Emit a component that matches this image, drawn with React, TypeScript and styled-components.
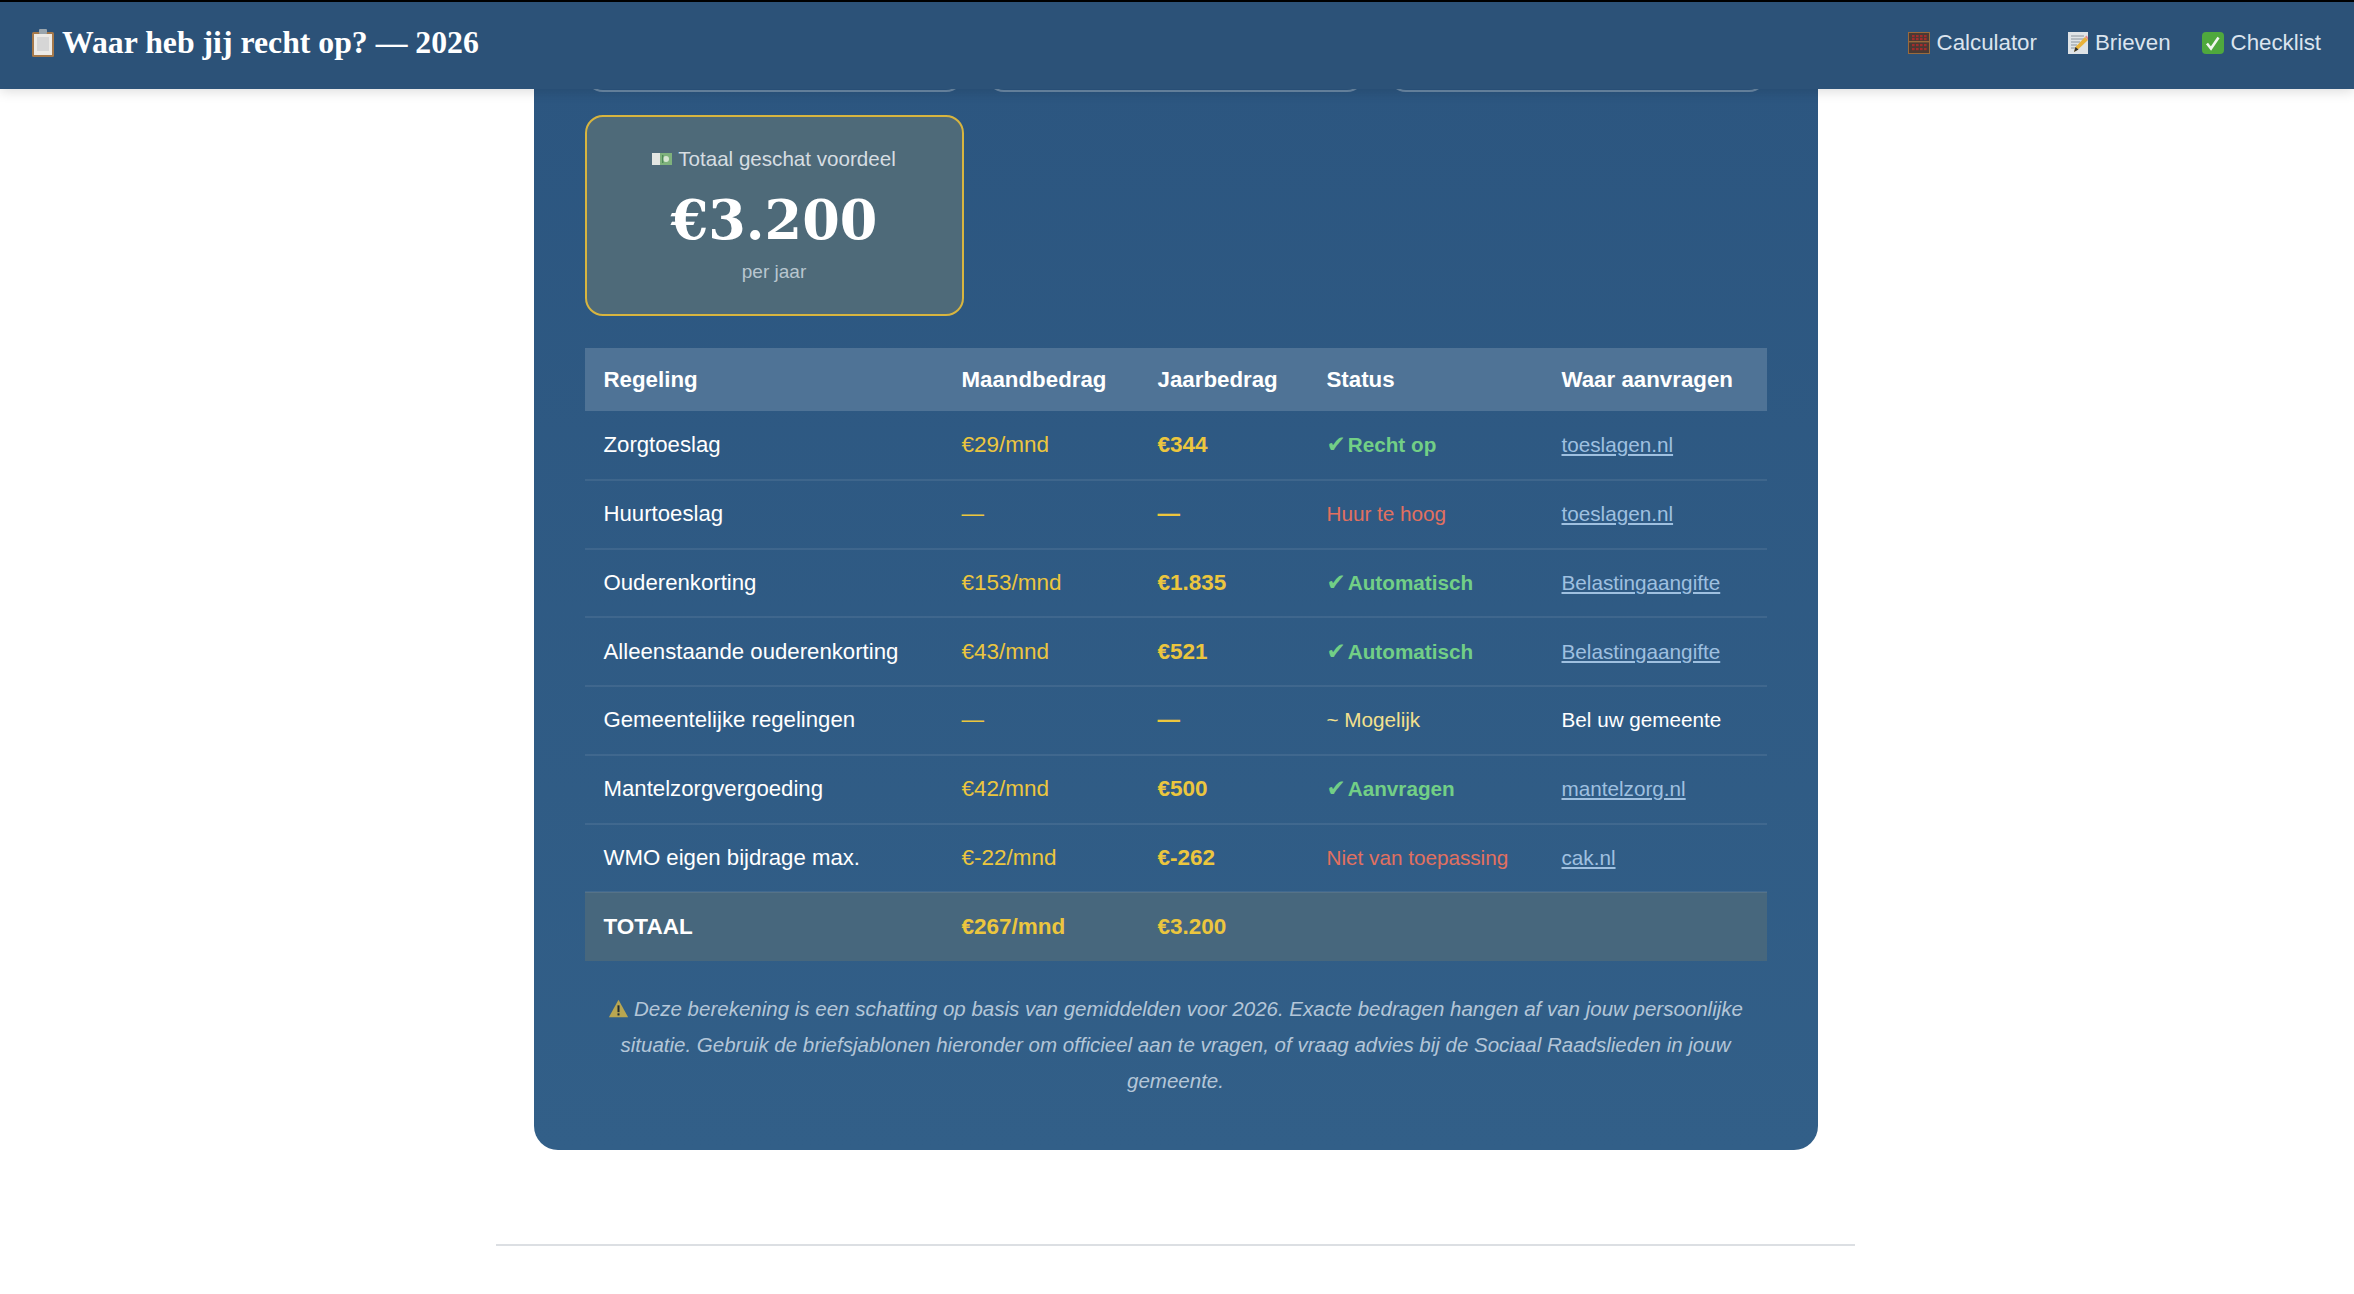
import React from "react";
import styled, { createGlobalStyle } from "styled-components";

const SERIF = `"Liberation Serif", "DejaVu Serif", serif`;
const WIDE_SERIF = `"DejaVu Serif", "Liberation Serif", serif`;
const SANS = `"Liberation Sans", "DejaVu Sans", sans-serif`;

const GlobalStyle = createGlobalStyle`
  html, body {
    margin: 0;
    padding: 0;
    background: #fff;
    font-family: ${SANS};
  }
  * { box-sizing: border-box; }
`;

type Tone = "ok" | "no" | "maybe";

const rows: {
  name: string;
  month: string;
  year: string;
  status: string;
  tone: Tone;
  link: string;
  plain?: boolean;
}[] = [
  { name: "Zorgtoeslag", month: "€29/mnd", year: "€344", status: "Recht op", tone: "ok", link: "toeslagen.nl" },
  { name: "Huurtoeslag", month: "—", year: "—", status: "Huur te hoog", tone: "no", link: "toeslagen.nl" },
  { name: "Ouderenkorting", month: "€153/mnd", year: "€1.835", status: "Automatisch", tone: "ok", link: "Belastingaangifte" },
  { name: "Alleenstaande ouderenkorting", month: "€43/mnd", year: "€521", status: "Automatisch", tone: "ok", link: "Belastingaangifte" },
  { name: "Gemeentelijke regelingen", month: "—", year: "—", status: "~ Mogelijk", tone: "maybe", link: "Bel uw gemeente", plain: true },
  { name: "Mantelzorgvergoeding", month: "€42/mnd", year: "€500", status: "Aanvragen", tone: "ok", link: "mantelzorg.nl" },
  { name: "WMO eigen bijdrage max.", month: "€-22/mnd", year: "€-262", status: "Niet van toepassing", tone: "no", link: "cak.nl" },
];

const toneColor = { ok: "#72cf86", no: "#e2705f", maybe: "#f3e08e" };

const ClipboardIcon = () => (
  <svg width="24" height="28" viewBox="0 0 24 28">
    <rect x="1" y="3" width="22" height="25" rx="1.5" fill="#a5794b" />
    <rect x="3" y="5" width="18" height="21" fill="#eceae6" />
    <rect x="6" y="8" width="12" height="14" fill="#d6d6d6" />
    <rect x="8" y="0" width="8" height="5" rx="1" fill="#9aa5ad" />
  </svg>
);

const AbacusIcon = () => (
  <svg width="22" height="22" viewBox="0 0 22 22">
    <rect x="0.5" y="0.5" width="21" height="21" fill="#4a3a34" stroke="#9a6a3c" />
    <rect x="1" y="9" width="20" height="1.4" fill="#9a6a3c" />
    {[4, 8, 12, 16].map((x) => (
      <g key={x} fill="#a32c2c">
        <rect x={x} y="3" width="2.6" height="2.2" />
        <rect x={x} y="6" width="2.6" height="2.2" />
        <rect x={x} y="12" width="2.6" height="2.2" />
        <rect x={x} y="16" width="2.6" height="2.2" />
      </g>
    ))}
  </svg>
);

const MemoIcon = () => (
  <svg width="20" height="22" viewBox="0 0 20 22">
    <rect width="20" height="22" fill="#dfe3e6" />
    <path d="M3 4h13M3 7h13M3 10h9M3 13h6M3 16h5" stroke="#8a949c" strokeWidth="1" />
    <path d="M6 20l1.5-5L17 5l3 3-10 9.5z" fill="#e8b23a" />
    <path d="M17 5l1.4-1.4 3 3L20 8z" fill="#e58a8a" />
    <path d="M6 20l1.5-5 3 2.5z" fill="#33302c" />
  </svg>
);

const CheckBoxIcon = () => (
  <svg width="22" height="22" viewBox="0 0 22 22">
    <rect width="22" height="22" rx="4" fill="#4fa83d" />
    <path d="M5 11.5l4 5 7.5-11" fill="none" stroke="#f2f5f0" strokeWidth="2.6" />
  </svg>
);

const MoneyIcon = () => (
  <svg width="20" height="14" viewBox="0 0 20 14">
    <rect y="1" width="9" height="12" fill="#e3e6e2" />
    <rect x="8" y="1" width="12" height="12" fill="#7fb27c" />
    <circle cx="14" cy="7" r="3" fill="#d7e6d2" />
    <rect x="10" y="3" width="1.4" height="8" fill="#4d8a57" />
  </svg>
);

const WarnIcon = () => (
  <svg width="21" height="19" viewBox="0 0 16 15">
    <path d="M8 0.5L15.6 14.5H0.4z" fill="#b9a650" />
    <rect x="7.2" y="5" width="1.6" height="5.4" fill="#1e2a33" />
    <rect x="7.2" y="11.3" width="1.6" height="1.7" fill="#1e2a33" />
  </svg>
);

const Header = styled.header`
  position: sticky;
  top: 0;
  z-index: 10;
  height: 89px;
  border-top: 2px solid #000;
  background: #2c5278;
  box-shadow: 0 2px 12px rgba(0, 0, 0, 0.15);
  padding: 0 33px 6px 31px;
  display: flex;
  align-items: center;
  justify-content: space-between;
`;

const Title = styled.h1`
  margin: 0;
  display: flex;
  align-items: center;
  gap: 7px;
  font-family: ${SERIF};
  font-size: 31.75px;
  font-weight: 700;
  color: #fff;
`;

const Nav = styled.nav`
  display: flex;
  gap: 31px;
`;

const NavLink = styled.a`
  display: flex;
  align-items: center;
  gap: 7px;
  font-size: 22.3px;
  color: #dbe4ee;
`;

const Main = styled.main`
  width: 2351px;
  display: flex;
  flex-direction: column;
  align-items: center;
`;

const Panel = styled.section`
  width: 1284px;
  height: 1078px;
  margin-top: -17px;
  padding: 0 51px;
  border-radius: 0 0 24px 24px;
  background: linear-gradient(180deg, #2c5680 0%, #325f88 100%);
`;

const StubRow = styled.div`
  display: grid;
  grid-template-columns: repeat(3, 379px);
  justify-content: space-between;
`;

const Stub = styled.div`
  height: 19.5px;
  border: 2px solid rgba(255, 255, 255, 0.3);
  border-top: 0;
  border-radius: 0 0 18px 18px;
`;

const Total = styled.div`
  width: 379px;
  height: 201px;
  margin-top: 23.5px;
  border: 2px solid #d8b53f;
  border-radius: 18px;
  background: #4e6a79;
  display: flex;
  flex-direction: column;
  align-items: center;
`;

const TotalLabel = styled.div`
  margin-top: 29px;
  display: flex;
  align-items: center;
  gap: 6px;
  font-size: 20.6px;
  line-height: 26px;
  color: #d6dde2;
`;

const TotalValue = styled.div`
  margin-top: 15px;
  font-family: ${WIDE_SERIF};
  font-size: 54px;
  line-height: 66px;
  font-weight: 700;
  color: #fff;
`;

const TotalSub = styled.div`
  margin-top: 7px;
  font-size: 19px;
  line-height: 24px;
  color: #b9c6cf;
`;

const Table = styled.table`
  width: 1182px;
  margin-top: 32px;
  border-collapse: collapse;
  table-layout: fixed;
  font-size: 22.5px;
  color: #fff;
`;

const Th = styled.th`
  height: 63px;
  padding: 0 0 0 19px;
  text-align: left;
  font-size: 22.3px;
  font-weight: 700;
  background: #4f7396;
`;

const Td = styled.td<{ $bold?: boolean; $gold?: boolean; $small?: boolean; $name?: boolean }>`
  height: 68.75px;
  padding: 0 0 0 19px;
  border-bottom: 2px solid rgba(255, 255, 255, 0.08);
  font-size: ${({ $small, $name }) => ($small ? "20.7px" : $name ? "22.2px" : "22.5px")};
  font-weight: ${({ $bold }) => ($bold ? 700 : 400)};
  color: ${({ $gold }) => ($gold ? "#ecc63e" : "#fff")};
`;

const TotalRow = styled.tr`
  background: #47677d;
  td {
    border-bottom: 0;
  }
`;

const Status = styled.span<{ $tone: Tone }>`
  color: ${({ $tone }) => toneColor[$tone]};
  font-weight: ${({ $tone }) => ($tone === "ok" ? 700 : 400)};
`;

const Check = styled.span`
  font-size: 23px;
  line-height: 0;
  margin-right: 2px;
`;

const Link = styled.a`
  color: #9fc0e0;
  text-decoration: underline;
`;

const Note = styled.p`
  margin: 30px 0 0;
  text-align: center;
  font-size: 20.5px;
  line-height: 36px;
  font-style: italic;
  color: #b4c6d8;
  svg {
    vertical-align: -2px;
    margin-right: 5px;
  }
`;

const Divider = styled.hr`
  width: 1359px;
  height: 2px;
  margin: 94px 0 0;
  border: 0;
  background: #dcdfe3;
`;

export default function App() {
  return (
    <>
      <GlobalStyle />
      <Header>
        <Title>
          <ClipboardIcon />
          Waar heb jij recht op? — 2026
        </Title>
        <Nav>
          <NavLink>
            <AbacusIcon />
            Calculator
          </NavLink>
          <NavLink>
            <MemoIcon />
            Brieven
          </NavLink>
          <NavLink>
            <CheckBoxIcon />
            Checklist
          </NavLink>
        </Nav>
      </Header>
      <Main>
        <Panel>
          <StubRow>
            <Stub />
            <Stub />
            <Stub />
          </StubRow>
          <Total>
            <TotalLabel>
              <MoneyIcon />
              Totaal geschat voordeel
            </TotalLabel>
            <TotalValue>€3.200</TotalValue>
            <TotalSub>per jaar</TotalSub>
          </Total>
          <Table>
            <colgroup>
              <col style={{ width: 358 }} />
              <col style={{ width: 196 }} />
              <col style={{ width: 169 }} />
              <col style={{ width: 235 }} />
              <col />
            </colgroup>
            <thead>
              <tr>
                <Th>Regeling</Th>
                <Th>Maandbedrag</Th>
                <Th>Jaarbedrag</Th>
                <Th>Status</Th>
                <Th>Waar aanvragen</Th>
              </tr>
            </thead>
            <tbody>
              {rows.map((row) => (
                <tr key={row.name}>
                  <Td $name>{row.name}</Td>
                  <Td $gold>{row.month}</Td>
                  <Td $gold $bold>
                    {row.year}
                  </Td>
                  <Td $small>
                    <Status $tone={row.tone}>
                      {row.tone === "ok" && <Check>✔</Check>}
                      {row.status}
                    </Status>
                  </Td>
                  <Td $small>{row.plain ? row.link : <Link>{row.link}</Link>}</Td>
                </tr>
              ))}
              <TotalRow>
                <Td $bold>TOTAAL</Td>
                <Td $gold $bold>
                  €267/mnd
                </Td>
                <Td $gold $bold>
                  €3.200
                </Td>
                <Td />
                <Td />
              </TotalRow>
            </tbody>
          </Table>
          <Note>
            <WarnIcon />
            Deze berekening is een schatting op basis van gemiddelden voor 2026. Exacte bedragen hangen af van jouw
            persoonlijke situatie. Gebruik de briefsjablonen hieronder om officieel aan te vragen, of vraag advies bij
            de Sociaal Raadslieden in jouw gemeente.
          </Note>
        </Panel>
        <Divider />
      </Main>
    </>
  );
}
